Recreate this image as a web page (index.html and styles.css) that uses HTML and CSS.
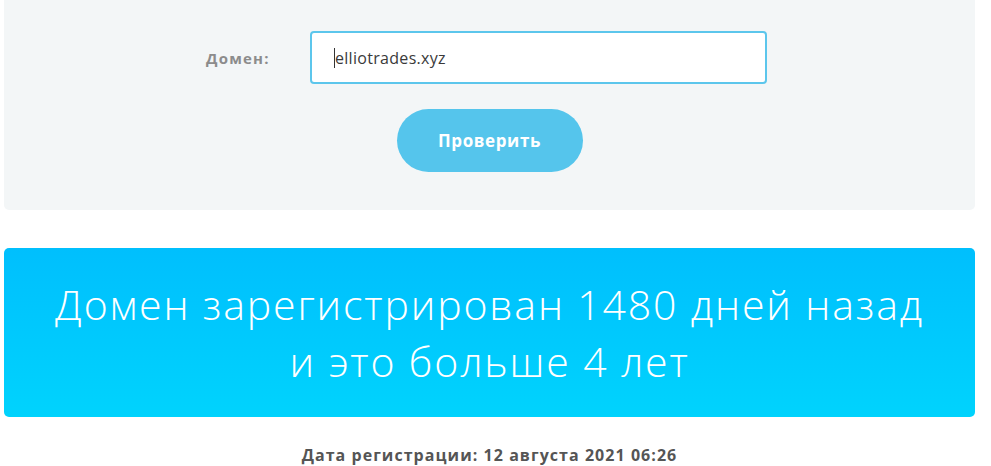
FILE: index.html
```html
<!DOCTYPE html>
<html lang="ru">
<head>
<meta charset="utf-8">
<title>Проверка домена</title>
<link rel="stylesheet" href="styles.css">
</head>
<body>
<div class="page">
  <section class="panel">
    <div class="form-row">
      <label class="label" for="domain">Домен:</label>
      <div class="input"><span class="caret"></span>elliotrades.xyz</div>
    </div>
    <div class="actions">
      <button class="btn">Проверить</button>
    </div>
  </section>
  <section class="result">
    <p class="result-text">Домен зарегистрирован 1480 дней назад<br>и это больше 4 лет</p>
  </section>
  <p class="date">Дата регистрации: 12 августа 2021 06:26</p>
</div>
</body>
</html>
```
FILE: styles.css
```css
* { box-sizing: border-box; }
html, body { margin: 0; padding: 0; background: #fff; }
body { font-family: "Open Sans", "Noto Sans", sans-serif; }
.page { margin: 0 16px 0 4px; }
.panel {
  background: #f3f6f7;
  border-radius: 0 0 5px 5px;
  height: 210px;
  padding-top: 31px;
}
.form-row {
  display: flex;
  align-items: center;
  padding-left: 202px;
}
.label {
  width: 104px;
  font-weight: 700;
  font-size: 15px;
  color: #8c8c8c;
  letter-spacing: 1.2px;
}
.input {
  position: relative;
  width: 457px;
  height: 53px;
  background: #fff;
  border: 2px solid #5cc6ec;
  border-radius: 4px;
  display: flex;
  align-items: center;
  padding-left: 22px;
  font-size: 16px;
  color: #3a3a3a;
  letter-spacing: 0.3px;
}
.caret {
  display: inline-block;
  width: 1px;
  height: 20px;
  background: #333;
}
.actions {
  display: flex;
  justify-content: center;
  margin-top: 25px;
}
.btn {
  width: 186px;
  height: 63px;
  border: none;
  border-radius: 32px;
  background: #55c5ec;
  color: #fff;
  font-family: "Open Sans", sans-serif;
  font-weight: 700;
  font-size: 17px;
  letter-spacing: 0.6px;
}
.result {
  margin-top: 38px;
  height: 169px;
  border-radius: 5px;
  background: linear-gradient(180deg, #00bffd 0%, #00d3fd 100%);
  display: flex;
  align-items: center;
  justify-content: center;
}
.result-text {
  margin: 0;
  text-align: center;
  color: #fff;
  font-weight: 300;
  font-size: 41px;
  line-height: 57px;
  letter-spacing: 1.85px;
}
.date {
  margin: 28px 0 0;
  text-align: center;
  font-weight: 700;
  font-size: 16px;
  line-height: 20px;
  color: #555;
  letter-spacing: 1.05px;
}
```
